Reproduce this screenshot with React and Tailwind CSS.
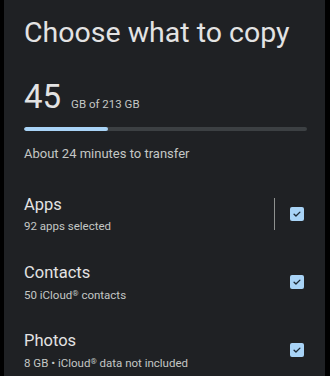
import React from 'react';

const items = [
  { title: 'Apps', sub: <>92 apps selected</>, divider: true },
  { title: 'Contacts', sub: <>50 iCloud<span className="text-[8px] align-[3px]">®</span> contacts</> },
  { title: 'Photos', sub: <>8 GB • iCloud<span className="text-[8px] align-[3px]">®</span> data not included</> },
];

const Check = () => (
  <div className="w-[14px] h-[14px] rounded-[2px] bg-[#a8d3f6] flex items-center justify-center">
    <svg width="10" height="10" viewBox="0 0 24 24" fill="none" stroke="#1c2a36" strokeWidth="3.2" strokeLinecap="round" strokeLinejoin="round">
      <path d="M5 12.5l4.5 4.5L19 7.5" />
    </svg>
  </div>
);

const App = () => {
  return (
    <div className="flex w-[330px] h-[376px] bg-black overflow-hidden" style={{ fontFamily: 'Roboto, "Open Sans", sans-serif' }}>
      <div className="ml-[4px] w-[321px] h-full bg-[#1f2124] pl-[20px] pr-[13px] text-[#e3e3e3]">
        <h1 className="mt-[13px] text-[28.5px] leading-[40px] font-normal">Choose what to copy</h1>

        <div className="mt-[26px] flex items-baseline gap-[10px]">
          <span className="text-[33px] leading-[36px]">45</span>
          <span className="text-[11.5px] text-[#c4c7c5]">GB of 213 GB</span>
        </div>

        <div className="mt-[12px] h-[4px] w-[283px] bg-[#3c4043] rounded-full overflow-hidden">
          <div className="h-full w-[84px] bg-[#a8d3f6] rounded-full" />
        </div>

        <p className="mt-[14px] text-[13px] leading-[18px] text-[#c4c7c5]">About 24 minutes to transfer</p>

        <div className="mt-[31px] flex flex-col gap-[28px]">
          {items.map((it) => (
            <div key={it.title} className="flex items-center h-[40px]">
              <div className="flex-1">
                <div className="text-[16.5px] leading-[22px]">{it.title}</div>
                <div className="mt-[2px] text-[11.5px] leading-[16px] text-[#c4c7c5]">{it.sub}</div>
              </div>
              {it.divider && <div className="w-px h-[32px] bg-[#8e918f] mr-[15px]" />}
              <div className="w-[22px] flex justify-start">
                <Check />
              </div>
            </div>
          ))}
        </div>
      </div>
    </div>
  );
};

export default App;
